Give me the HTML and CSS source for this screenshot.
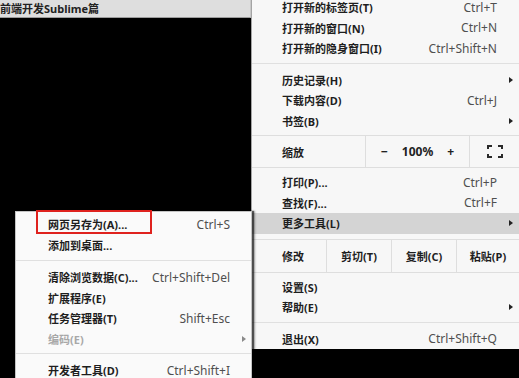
FILE: index.html
```html
<!DOCTYPE html>
<html lang="zh-CN">
<head>
<meta charset="utf-8">
<title>Chrome 菜单</title>
<link rel="stylesheet" href="styles.css">
</head>
<body>
<div class="titlebar">前端开发Sublime篇</div>

<div class="menu main">
  <div class="item"><span class="label">打开新的标签页(T)</span><span class="key">Ctrl+T</span><span class="slot"></span></div>
  <div class="item"><span class="label">打开新的窗口(N)</span><span class="key">Ctrl+N</span><span class="slot"></span></div>
  <div class="item"><span class="label">打开新的隐身窗口(I)</span><span class="key">Ctrl+Shift+N</span><span class="slot"></span></div>
  <div class="sep"></div>
  <div class="item"><span class="label">历史记录(H)</span><span class="slot"><i class="arrow"></i></span></div>
  <div class="item"><span class="label">下载内容(D)</span><span class="key">Ctrl+J</span><span class="slot"></span></div>
  <div class="item"><span class="label">书签(B)</span><span class="slot"><i class="arrow"></i></span></div>
  <div class="zoomrow">
    <div class="cell zlabel"><span class="label">缩放</span></div>
    <div class="cell zctl"><span>−</span><span>100%</span><span>+</span></div>
    <div class="cell zfull">
      <svg width="16" height="13" viewBox="0 0 16 13"><path d="M1 4V1h4M11 1h4v3M15 9v3h-4M5 12H1V9" fill="none" stroke="#2a2a2a" stroke-width="2"/></svg>
    </div>
  </div>
  <div class="item"><span class="label">打印(P)...</span><span class="key">Ctrl+P</span><span class="slot"></span></div>
  <div class="item"><span class="label">查找(F)...</span><span class="key">Ctrl+F</span><span class="slot"></span></div>
  <div class="item active"><span class="label">更多工具(L)</span><span class="slot"><i class="arrow"></i></span></div>
  <div class="editrow">
    <div class="cell e1"><span class="label">修改</span></div>
    <div class="cell e2"><span class="label">剪切(T)</span></div>
    <div class="cell e3"><span class="label">复制(C)</span></div>
    <div class="cell e4"><span class="label">粘贴(P)</span></div>
  </div>
  <div class="item"><span class="label">设置(S)</span><span class="slot"></span></div>
  <div class="item"><span class="label">帮助(E)</span><span class="slot"><i class="arrow"></i></span></div>
  <div class="sep"></div>
  <div class="item"><span class="label">退出(X)</span><span class="key">Ctrl+Shift+Q</span><span class="slot"></span></div>
</div>

<div class="menu sub">
  <div class="highlight-box"></div>
  <div class="item"><span class="label">网页另存为(A)...</span><span class="key">Ctrl+S</span><span class="slot"></span></div>
  <div class="item"><span class="label">添加到桌面...</span><span class="slot"></span></div>
  <div class="sep wide"></div>
  <div class="item"><span class="label">清除浏览数据(C)...</span><span class="key">Ctrl+Shift+Del</span><span class="slot"></span></div>
  <div class="item"><span class="label">扩展程序(E)</span><span class="slot"></span></div>
  <div class="item"><span class="label">任务管理器(T)</span><span class="key">Shift+Esc</span><span class="slot"></span></div>
  <div class="item disabled"><span class="label">编码(E)</span><span class="slot"><i class="arrow grey"></i></span></div>
  <div class="sep"></div>
  <div class="item"><span class="label">开发者工具(D)</span><span class="key">Ctrl+Shift+I</span><span class="slot"></span></div>
</div>
</body>
</html>
```

FILE: styles.css
```css
html, body {
  margin: 0;
  padding: 0;
}
body {
  width: 519px;
  height: 378px;
  background: #000;
  position: relative;
  overflow: hidden;
  font-family: "Noto Sans", "Noto Sans CJK SC", sans-serif;
  color: #1e1e1e;
}
.titlebar {
  width: 251px;
  height: 18px;
  box-sizing: border-box;
  background: #dedede;
  border-bottom: 1px solid #9c9c9c;
  border-right: 1px solid #c8c8c8;
  font-size: 11px;
  font-weight: 700;
  line-height: 17px;
  color: #222;
  white-space: nowrap;
  overflow: hidden;
}
.menu {
  position: absolute;
  display: flex;
  flex-direction: column;
  box-sizing: border-box;
}
.main {
  left: 251px;
  top: -3px;
  width: 268px;
  background: #f7f7f7;
  border-left: 1px solid #a4a4a4;
}
.sub {
  left: 15px;
  top: 211px;
  width: 237px;
  height: 180px;
  padding-top: 2px;
  background: #fafafa;
  border: 1px solid #c4c4c4;
  box-shadow: 2px 0 1px rgba(0, 0, 0, 0.55), 3px 0 2px rgba(0, 0, 0, 0.3);
}
.item {
  display: flex;
  align-items: center;
  height: 20.5px;
  flex: none;
}
.main .item { padding-left: 30px; }
.sub .item { padding-left: 32px; }
.label {
  flex: 1;
  font-size: 11px;
  font-weight: 700;
  white-space: nowrap;
  color: #1e1e1e;
}
.key {
  font-size: 12px;
  color: #4f4f4f;
  white-space: nowrap;
}
.slot {
  width: 22px;
  flex: none;
  display: flex;
  align-items: center;
}
.sub .slot { width: 21px; }
.arrow {
  display: block;
  margin-left: 12px;
  width: 0;
  height: 0;
  border-left: 4px solid #222;
  border-top: 3.5px solid transparent;
  border-bottom: 3.5px solid transparent;
}
.arrow.grey { border-left-color: #8a8a8a; }
.disabled .label { color: #a8a8a8; }
.active { background: #d4d4d4; }
.sep {
  height: 1px;
  background: #e0e0e0;
  margin: 4px 0 6px;
  flex: none;
}
.sep.wide { margin: 5px 0 6px; }
.zoomrow, .editrow {
  display: flex;
  flex: none;
  border-top: 1px solid #dedede;
  border-bottom: 1px solid #dedede;
}
.zoomrow { height: 31px; margin: 4px 0; }
.editrow { height: 32px; margin: 5px 0 4px; }
.cell {
  display: flex;
  align-items: center;
  justify-content: center;
  box-sizing: border-box;
}
.cell + .cell { border-left: 1px solid #dedede; }
.zlabel { width: 113px; padding-left: 30px; justify-content: flex-start; }
.zctl {
  width: 104px;
  justify-content: space-between;
  padding: 0 15px;
  font-size: 12px;
  font-weight: 700;
  color: #222;
}
.zfull { flex: 1; }
.e1 { width: 74px; padding-left: 30px; justify-content: flex-start; }
.e2 { width: 65px; }
.e3 { width: 65px; }
.e4 { flex: 1; }
.editrow .label { flex: none; }
.highlight-box {
  position: absolute;
  left: 20px;
  top: -2px;
  width: 116px;
  height: 24px;
  box-sizing: border-box;
  border: 2px solid #df221e;
}
```
